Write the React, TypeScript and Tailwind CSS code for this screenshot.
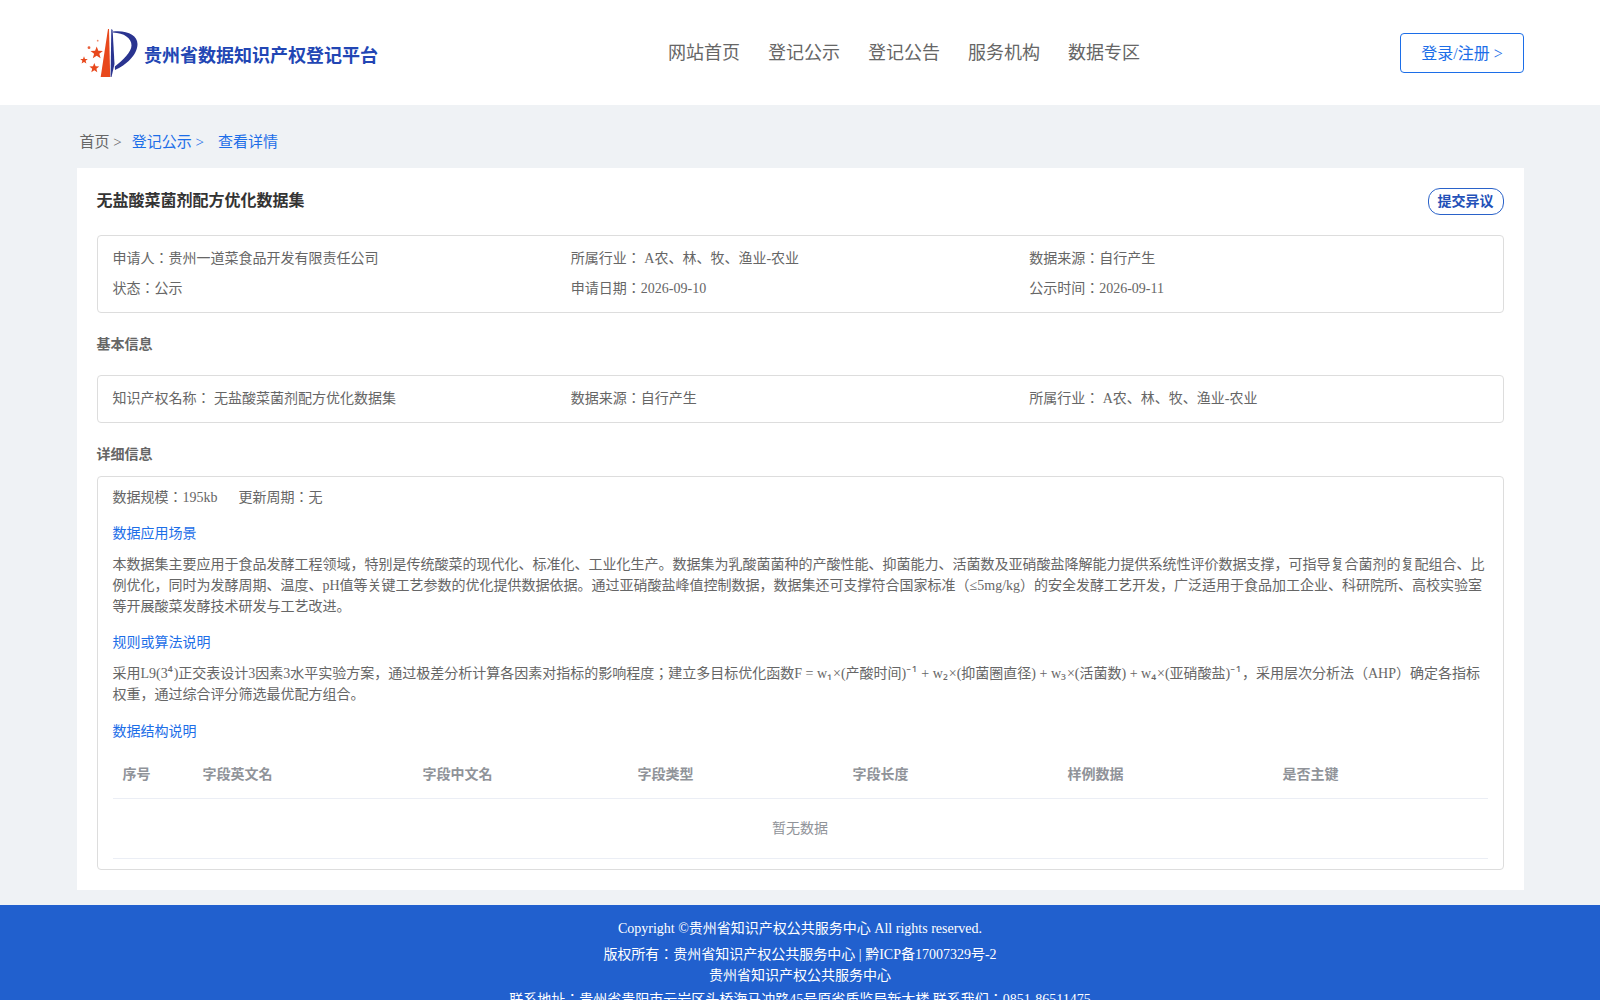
import React from 'react';

const NAV_ITEMS = ['网站首页', '登记公示', '登记公告', '服务机构', '数据专区'];
const COLUMNS = [
  { label: '序号', width: 'w-[80px]' },
  { label: '字段英文名', width: 'w-[220px]' },
  { label: '字段中文名', width: 'w-[215px]' },
  { label: '字段类型', width: 'w-[215px]' },
  { label: '字段长度', width: 'w-[215px]' },
  { label: '样例数据', width: 'w-[215px]' },
  { label: '是否主键', width: 'flex-1' },
];

const Logo = () => (
  <svg width="58" height="50" viewBox="0 0 58 50" className="shrink-0">
    <path d="M28 1 L29 1 L30.2 49 L20.7 49 Z" fill="#e8481c" />
    <path d="M31.3 1 L32.6 2 L34.5 36 L31.5 49 L30.6 49 Z" fill="#2a3490" />
    <path d="M33 3.5 C47 2 57.5 7 57.5 16 C57.5 27 46 37 35 42 L34.8 38.5 C43 32 51.5 24 51.5 17.5 C51.5 10 44 5 33 4.5 Z" fill="#2a3490" />
    <path d="M16.7 18.5 L18.3 22.8 L22.9 23 L19.3 25.8 L20.6 30.2 L16.7 27.7 L12.8 30.2 L14.1 25.8 L10.5 23 L15.1 22.8 Z" fill="#e8481c" />
    <path d="M4 28.3 L5 31 L7.8 31.1 L5.6 32.8 L6.4 35.5 L4 33.9 L1.6 35.5 L2.4 32.8 L0.2 31.1 L3 31 Z" fill="#e8481c" />
    <path d="M14.3 35 L15.6 38.3 L19.2 38.5 L16.4 40.7 L17.3 44.2 L14.3 42.2 L11.3 44.2 L12.2 40.7 L9.4 38.5 L13 38.3 Z" fill="#e8481c" />
    <circle cx="9" cy="19.7" r="1.4" fill="#e8603c" />
    <circle cx="17.7" cy="12.7" r="0.9" fill="#ee8a6c" />
  </svg>
);

// sub/superscript digits are wider in the original than Liberation Serif draws them
const Sc = ({ children }: { children: React.ReactNode }) => (
  <span className="font-['Noto_Sans'] leading-[0] tracking-[1px]">{children}</span>
);

export default function App() {
  return (
    <div className="h-screen overflow-hidden bg-[#eff2f5] font-['Liberation_Serif','Noto_Sans_CJK_JP',serif] text-[14px] text-[#666666]">
      {/* Header */}
      <header className="h-[105px] bg-white flex items-center pl-[80px] pr-[76px]">
        <div className="flex items-center gap-[6px] w-[400px]">
          <Logo />
          <span className="text-[18px] font-bold text-[#2246b4] mt-[7px]">贵州省数据知识产权登记平台</span>
        </div>
        <nav className="flex gap-[28px] ml-[188px] text-[18px] text-[#666666] mt-[2px]">
          {NAV_ITEMS.map((item) => (
            <a key={item}>{item}</a>
          ))}
        </nav>
        <button className="ml-auto w-[124px] h-[40px] pt-[2px] border border-[#1c6ee8] rounded-[4px] text-[16px] text-[#1c6ee8] bg-white">
          登录/注册 &gt;
        </button>
      </header>

      {/* Breadcrumb */}
      <div className="w-[1447px] mx-auto h-[63px] flex items-center pl-[3px] text-[15px] pt-[12px]">
        <span>首页 &gt;</span>
        <span className="text-[#1c6ee8] ml-[10px]">登记公示 &gt;</span>
        <span className="text-[#1c6ee8] ml-[14px]">查看详情</span>
      </div>

      {/* Detail card */}
      <main className="w-[1447px] mx-auto bg-white px-[20px] pt-[20px] pb-[20px]">
        <div className="flex justify-between items-start h-[47px]">
          <h1 className="text-[16px] font-bold text-[#333333] leading-[24px] mt-[1px]">无盐酸菜菌剂配方优化数据集</h1>
          <button className="h-[27px] w-[76px] border border-[#2a62c9] rounded-[12px] text-[14px] font-bold text-[#2250b8]">提交异议</button>
        </div>

        <section className="border border-[#dddddd] rounded-[4px] px-[15px] h-[78px] pt-[7px] grid grid-cols-3 auto-rows-[30px] items-center">
          <div>申请人：贵州一道菜食品开发有限责任公司</div>
          <div>所属行业： A农、林、牧、渔业-农业</div>
          <div>数据来源：自行产生</div>
          <div>状态：公示</div>
          <div>申请日期：2026-09-10</div>
          <div>公示时间：2026-09-11</div>
        </section>

        <h2 className="h-[62px] flex items-center font-bold text-[14px] text-[#666666]">基本信息</h2>

        <section className="border border-[#dddddd] rounded-[4px] px-[15px] pb-[2px] h-[48px] grid grid-cols-3 items-center">
          <div>知识产权名称： 无盐酸菜菌剂配方优化数据集</div>
          <div>数据来源：自行产生</div>
          <div>所属行业： A农、林、牧、渔业-农业</div>
        </section>

        <h2 className="h-[53px] flex items-center font-bold text-[14px] text-[#666666] pt-[10px]">详细信息</h2>

        <section className="border border-[#dddddd] rounded-[4px] px-[15px] pb-[10px]">
          <div className="h-[42px] pb-[2px] flex items-center gap-[21px]">
            <span>数据规模：195kb</span>
            <span>更新周期：无</span>
          </div>
          <h3 className="text-[#1c6ee8] leading-[21px] mt-[4px]">数据应用场景</h3>
          <p className="leading-[21px] mt-[10px]">
            本数据集主要应用于食品发酵工程领域，特别是传统酸菜的现代化、标准化、工业化生产。数据集为乳酸菌菌种的产酸性能、抑菌能力、活菌数及亚硝酸盐降解能力提供系统性评价数据支撑，可指导复合菌剂的复配组合、比例优化，同时为发酵周期、温度、pH值等关键工艺参数的优化提供数据依据。通过亚硝酸盐峰值控制数据，数据集还可支撑符合国家标准（≤5mg/kg）的安全发酵工艺开发，广泛适用于食品加工企业、科研院所、高校实验室等开展酸菜发酵技术研发与工艺改进。
          </p>
          <h3 className="text-[#1c6ee8] leading-[21px] mt-[15px]">规则或算法说明</h3>
          <p className="leading-[21px] mt-[10px]">
            采用L9(3<Sc>⁴</Sc>)正交表设计3因素3水平实验方案，通过极差分析计算各因素对指标的影响程度；建立多目标优化函数F = w<Sc>₁</Sc>×(产酸时间)<Sc>⁻¹</Sc> + w<Sc>₂</Sc>×(抑菌圈直径) + w<Sc>₃</Sc>×(活菌数) + w<Sc>₄</Sc>×(亚硝酸盐)<Sc>⁻¹</Sc>，采用层次分析法（AHP）确定各指标权重，通过综合评分筛选最优配方组合。
          </p>
          <h3 className="text-[#1c6ee8] leading-[21px] mt-[16px]">数据结构说明</h3>

          {/* Field table */}
          <div className="mt-[8px]">
            <div className="flex h-[49px] items-center border-b border-[#ebeef5] font-bold text-[#909399]">
              {COLUMNS.map((col) => (
                <div key={col.label} className={`${col.width} pl-[10px]`}>{col.label}</div>
              ))}
            </div>
            <div className="h-[60px] flex items-center justify-center border-b border-[#ebeef5] text-[#909399]">暂无数据</div>
          </div>
        </section>
      </main>

      {/* Footer */}
      <footer className="mt-[15px] bg-[#2160ce] text-white text-center pt-[13px] pb-[20px]">
        <p className="leading-[21px]">Copyright ©贵州省知识产权公共服务中心 All rights reserved.</p>
        <p className="leading-[21px] mt-[5px]">版权所有：贵州省知识产权公共服务中心 | 黔ICP备17007329号-2</p>
        <p className="leading-[21px]">贵州省知识产权公共服务中心</p>
        <p className="leading-[21px] mt-[3px]">联系地址：贵州省贵阳市云岩区头桥海马冲路45号原省质监局新大楼 联系我们：0851-86511475</p>
      </footer>
    </div>
  );
}
